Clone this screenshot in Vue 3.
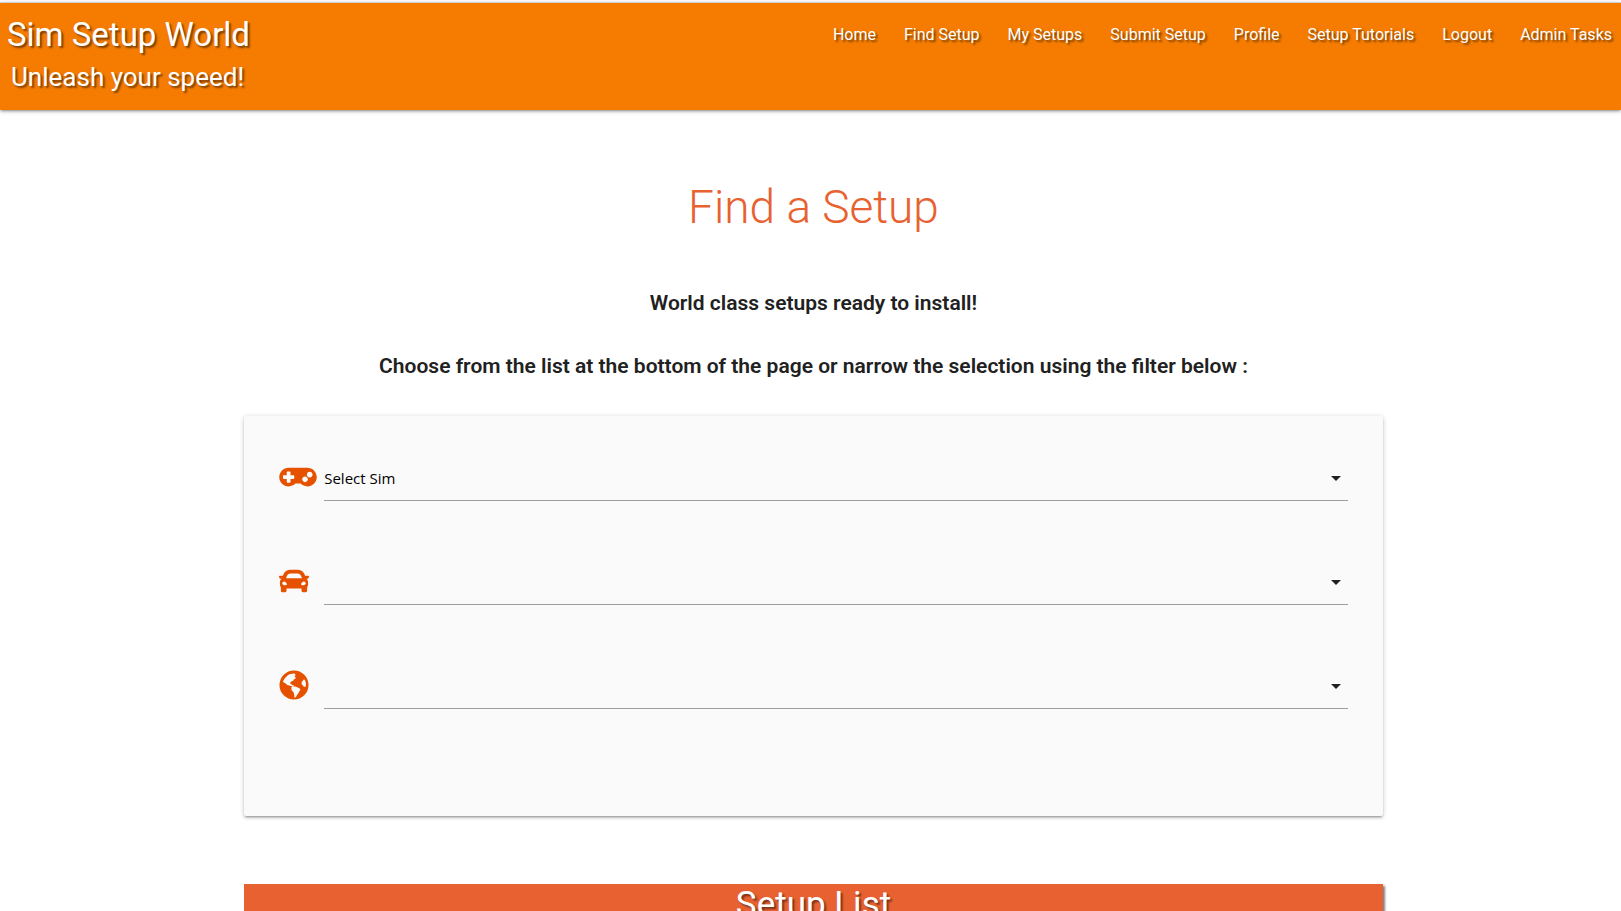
<script setup>
const links = ['Home', 'Find Setup', 'My Setups', 'Submit Setup', 'Profile', 'Setup Tutorials', 'Logout', 'Admin Tasks']
const fields = [
  {
    id: 'sim',
    label: 'Sim',
    text: 'Select Sim',
    box: '0 0 640 512',
    wide: true,
    path: 'M480 96H160C71.6 96 0 167.6 0 256s71.6 160 160 160c44.8 0 85.2-18.4 114.2-48h91.5c29 29.6 69.5 48 114.2 48 88.4 0 160-71.6 160-160S568.4 96 480 96zM256 276c0 6.6-5.4 12-12 12h-52v52c0 6.6-5.4 12-12 12h-40c-6.6 0-12-5.4-12-12v-52H76c-6.6 0-12-5.4-12-12v-40c0-6.6 5.4-12 12-12h52v-52c0-6.6 5.4-12 12-12h40c6.6 0 12 5.4 12 12v52h52c6.6 0 12 5.4 12 12v40zm184 68c-26.5 0-48-21.5-48-48s21.5-48 48-48 48 21.5 48 48-21.5 48-48 48zm80-80c-26.5 0-48-21.5-48-48s21.5-48 48-48 48 21.5 48 48-21.5 48-48 48z'
  },
  {
    id: 'car',
    label: 'Car',
    text: '',
    box: '0 0 512 512',
    path: 'M499.991 168h-54.815l-7.854-20.944c-9.192-24.513-25.425-45.351-46.942-60.263S343.651 64 317.472 64H194.528c-26.18 0-51.391 7.882-72.908 22.793-21.518 14.912-37.75 35.75-46.942 60.263L66.824 168H12.009c-8.191 0-13.974 8.024-11.384 15.795l8 24A12 12 0 0 0 20.009 216h28.815l-.052.14C29.222 227.093 16 247.997 16 272v48c0 16.225 6.049 31.029 16 42.309V424c0 13.255 10.745 24 24 24h48c13.255 0 24-10.745 24-24v-40h256v40c0 13.255 10.745 24 24 24h48c13.255 0 24-10.745 24-24v-61.691c9.951-11.281 16-26.085 16-42.309v-48c0-24.003-13.222-44.907-32.772-55.86l-.052-.14h28.815a12 12 0 0 0 11.384-8.205l8-24c2.59-7.771-3.193-15.795-11.384-15.795zm-365.388 1.528C143.918 144.689 168 128 194.528 128h122.944c26.528 0 50.61 16.689 59.925 41.528L391.824 208H120.176l14.427-38.472zM88 328c-17.673 0-32-14.327-32-32s14.327-32 32-32 48 30.327 48 48-30.327 16-48 16zm336 0c-17.673 0-48 1.673-48-16s30.327-48 48-48 32 14.327 32 32-14.327 32-32 32z'
  },
  {
    id: 'track',
    label: 'Track',
    text: '',
    box: '0 0 512 512',
    path: 'M256 8a248 248 0 1 0 0 496 248 248 0 0 0 0-496zM65 202l28-52 48-52 36-25 45-10 38-4 20 14-4 26-12 9 20 20-8 26-23 5-10 24-28 10-22 21-5 16 20 8 14 20 34 6 20 20-8 8-28-8-28-8-30-10-34-7-24-20-19-14zM214 292l28-12 30-2 25 14 24 7 26 14 17 15-7 26-18 20-10 28-18 18-14 28-24 24-12-2 2-30-7-24-3-28-18-20-18-24-5-20zM388 204l22-24 13-20 17 5 16 43 4 48-10 35-25-5-20-24-19-20z'
  }
]
</script>

<template>
  <div class="page">
    <header class="topbar">
      <div class="brand">
        <a class="brand-name" href="#">Sim Setup World</a>
        <span class="tagline">Unleash your speed!</span>
      </div>
      <nav class="nav" aria-label="Main">
        <a v-for="link in links" :key="link" href="#">{{ link }}</a>
      </nav>
    </header>

    <main class="main">
      <div class="container">
        <h1>Find a Setup</h1>
        <p class="lead">World class setups ready to install!</p>
        <p class="lead">Choose from the list at the bottom of the page or narrow the selection using the filter below :</p>

        <form class="card">
          <div v-for="field in fields" :key="field.id" class="field">
            <label class="icon-slot" :for="field.id" :aria-label="field.label">
              <svg class="icon" :class="{ wide: field.wide }" :viewBox="field.box" aria-hidden="true">
                <path :d="field.path" fill-rule="evenodd" />
              </svg>
            </label>
            <div class="select-wrap">
              <select :id="field.id">
                <option>{{ field.text }}</option>
              </select>
              <svg class="caret" viewBox="0 0 10 5" aria-hidden="true"><path d="M0 0h10L5 5z" /></svg>
            </div>
          </div>
        </form>

        <h2 class="band">Setup List</h2>
      </div>
    </main>
  </div>
</template>

<style>
body {
  margin: 0;
  background: #fff;
  overflow: hidden;
}
</style>

<style scoped>
.page {
  height: 100vh;
  overflow: hidden;
  padding-top: 2px;
  box-sizing: border-box;
  font-family: Roboto, "Open Sans", sans-serif;
  color: #212121;
}
.topbar {
  display: flex;
  justify-content: space-between;
  align-items: flex-start;
  height: 107px;
  padding: 0 9px 0 7px;
  border-top: 1px solid #cfcfd6;
  background: #f57c00;
  box-shadow: 0 2px 2px 0 rgba(0, 0, 0, 0.14), 0 3px 1px -2px rgba(0, 0, 0, 0.12), 0 1px 5px 0 rgba(0, 0, 0, 0.2);
  color: #fff;
  text-shadow: 2px 2px 2px rgba(0, 0, 0, 0.5);
}
.brand {
  display: flex;
  flex-direction: column;
  padding-top: 11px;
}
.brand-name {
  font-size: 33px;
  line-height: 42px;
  color: inherit;
  text-decoration: none;
}
.tagline {
  padding-left: 4px;
  font-size: 26px;
  line-height: 42px;
}
.nav {
  display: flex;
  gap: 28px;
  padding-top: 20px;
}
.nav a {
  font-size: 16px;
  line-height: 24px;
  color: inherit;
  text-decoration: none;
  white-space: nowrap;
}
.main {
  padding-left: 6px;
}
.container {
  width: 70.5%;
  margin: 0 auto;
}
h1 {
  margin: 69px 0 53px;
  font-size: 46px;
  line-height: 56px;
  font-weight: 300;
  text-align: center;
  color: #e86231;
}
.lead {
  margin: 0 0 33px;
  font-size: 21px;
  line-height: 30px;
  font-weight: 600;
  text-align: center;
}
.card {
  display: flex;
  flex-direction: column;
  gap: 59px;
  margin-top: 35px;
  padding: 40px 35px 107px;
  border-radius: 2px;
  background: #fafafa;
  box-shadow: 0 2px 2px 0 rgba(0, 0, 0, 0.14), 0 3px 1px -2px rgba(0, 0, 0, 0.12), 0 1px 5px 0 rgba(0, 0, 0, 0.2);
}
.field {
  display: flex;
}
.icon-slot {
  display: flex;
  flex: none;
  align-items: center;
  width: 45px;
  height: 41px;
}
.icon {
  width: 30px;
  height: 30px;
  fill: #e65100;
}
.icon.wide {
  width: 38px;
}
.select-wrap {
  position: relative;
  flex: 1;
}
select {
  display: block;
  width: 100%;
  height: 45px;
  padding: 0;
  border: 0;
  border-bottom: 1px solid #9e9e9e;
  border-radius: 0;
  appearance: none;
  background: transparent;
  font-family: "Open Sans", "Noto Sans", sans-serif;
  font-size: 15px;
  color: #000;
}
.caret {
  position: absolute;
  right: 7px;
  top: 20px;
  width: 10px;
  height: 5px;
  fill: #212121;
}
.band {
  margin: 68px 0 0;
  background: #e86231;
  box-shadow: 2px 2px 2px rgba(0, 0, 0, 0.5);
  font-size: 35px;
  line-height: 42px;
  font-weight: 400;
  text-align: center;
  color: #fff;
  text-shadow: 2px 2px 2px rgba(0, 0, 0, 0.5);
}
</style>
